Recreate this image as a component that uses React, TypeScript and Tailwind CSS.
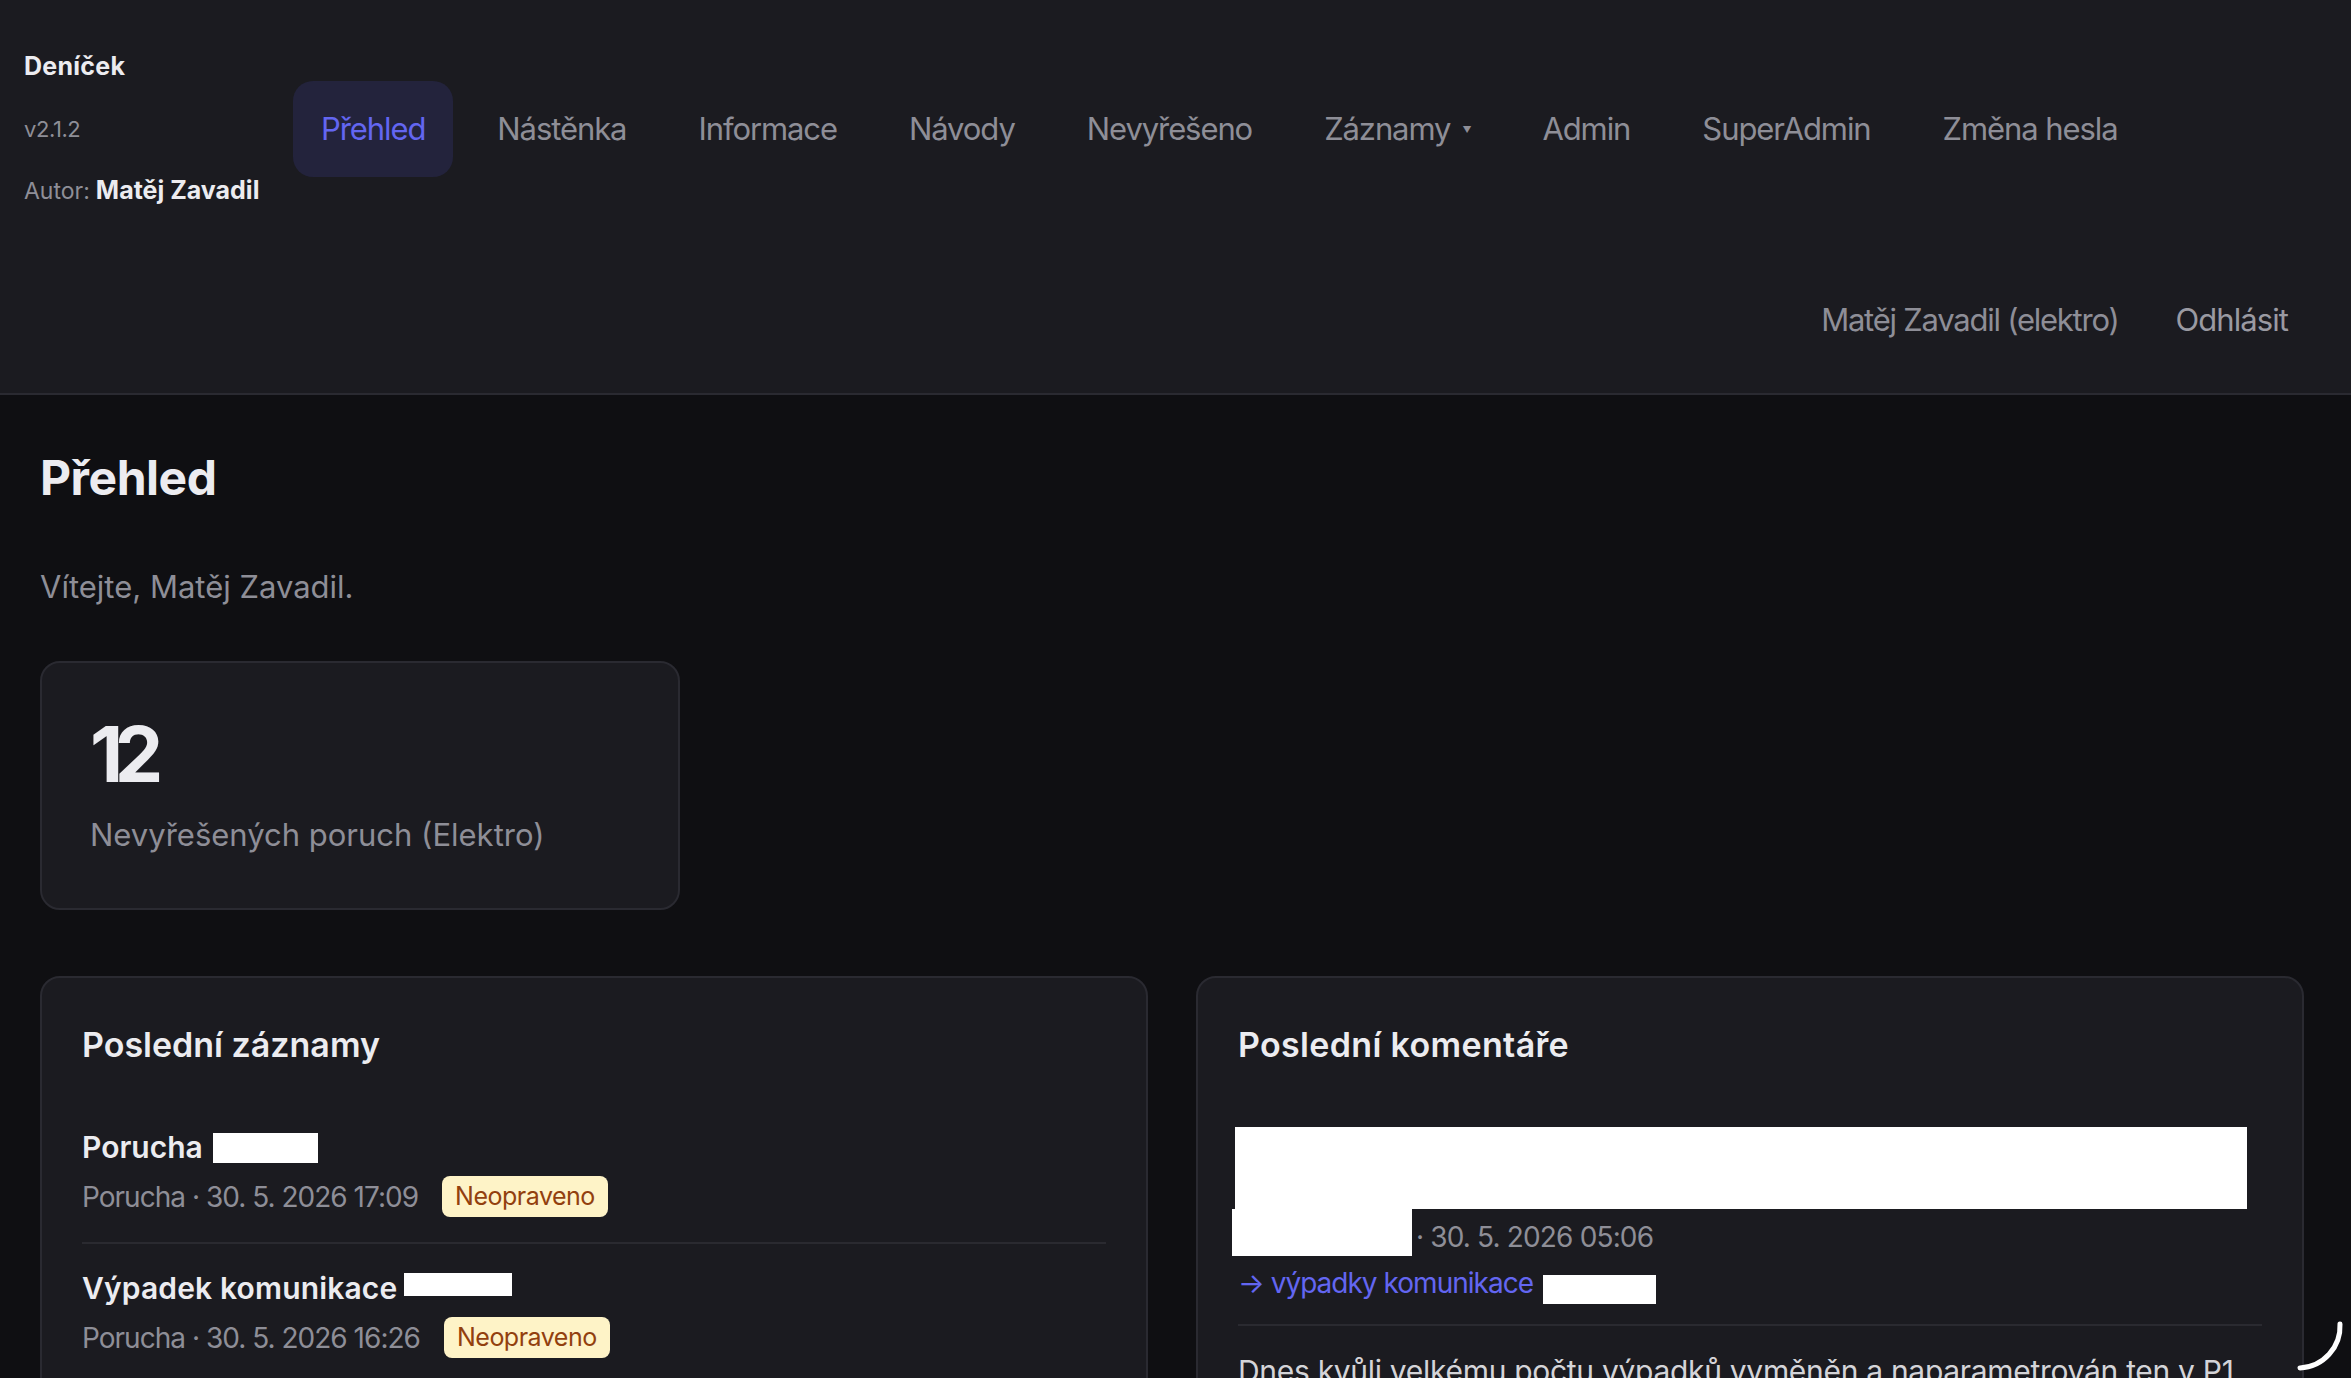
import React from "react";

const navItems = [
  "Přehled",
  "Nástěnka",
  "Informace",
  "Návody",
  "Nevyřešeno",
  "Záznamy",
  "Admin",
  "SuperAdmin",
  "Změna hesla",
];

function Redact({ className }: { className: string }) {
  return <span className={"inline-block bg-white shrink-0 " + className} />;
}

function Badge() {
  return (
    <span className="inline-flex items-center h-[41px] px-[13px] rounded-[8px] bg-[#fef3c7] text-[#92400e] text-[25px] tracking-[-0.02em] leading-none">
      Neopraveno
    </span>
  );
}

export default function App() {
  return (
    <div className="h-[1378px] w-full overflow-hidden bg-[#0f0f12] font-[Inter,sans-serif] relative">
      {/* Header */}
      <header className="bg-[#1b1b20] border-b-2 border-[#2a2a31] h-[395px] pt-[49px] pl-6 pr-[63px] flex flex-col">
        <div className="flex items-center">
          <div className="w-[269px] shrink-0 flex flex-col gap-[26px]">
            <div className="h-[36px] flex items-center text-[25px] font-bold text-[#ececf0] tracking-[0.01em]">
              Deníček
            </div>
            <div className="h-[36px] flex items-center text-[22px] text-[#8e8e97] tracking-[-0.02em]">
              v2.1.2
            </div>
            <div className="h-[36px] flex items-center text-[23px] text-[#8e8e97] whitespace-nowrap">
              <span>Autor:</span>
              <span className="ml-[6px] font-bold text-[25px] text-[#ececf0]">Matěj Zavadil</span>
            </div>
          </div>
          <nav className="flex items-center gap-4">
            {navItems.map((item, i) => (
              <div
                key={item}
                className={
                  "h-[96px] px-7 flex items-center rounded-[20px] text-[31px] tracking-[-0.035em] whitespace-nowrap " +
                  (i === 0 ? "bg-[#23233c] text-[#6366f1]" : "text-[#8e8e97]")
                }
              >
                {item}
                {item === "Záznamy" && (
                  <span className="ml-[12px] text-[9px] text-[#8e8e97] leading-none">▼</span>
                )}
              </div>
            ))}
          </nav>
        </div>
        <div className="mt-[63px] h-[96px] flex items-center justify-end text-[31px] text-[#8e8e97] whitespace-nowrap">
          <span className="tracking-[-0.04em]">Matěj Zavadil (elektro)</span>
          <span className="ml-[57px] tracking-[-0.03em] text-[#9a9aa2]">Odhlásit</span>
        </div>
      </header>

      {/* Main */}
      <main className="pl-10 pr-[47px] pt-[53px]">
        <h1 className="text-[48px] leading-[1.25] font-bold text-[#ececf0] tracking-[-0.01em]">Přehled</h1>
        <p className="mt-[55px] text-[31px] leading-[48px] text-[#8e8e97]">
          Vítejte, Matěj Zavadil.
        </p>

        <div className="mt-[50px] w-[640px] h-[249px] rounded-[20px] border-2 border-[#2a2a31] bg-[#1b1b20] p-12">
          <div className="mt-[5px] text-[77px] leading-none font-bold text-[#ececf0] tracking-[-0.11em]">12</div>
          <div className="mt-[18px] text-[31px] leading-[48px] text-[#8e8e97]">
            Nevyřešených poruch (Elektro)
          </div>
        </div>

        <div className="mt-[66px] grid grid-cols-2 gap-12">
          {/* Left card */}
          <section className="rounded-[20px] border-2 border-[#2a2a31] bg-[#1b1b20] px-10 pt-[43px] pb-10">
            <h2 className="text-[34px] leading-[1.4] font-semibold text-[#ececf0]">
              Poslední záznamy
            </h2>
            <div className="mt-[34px]">
              <div className="py-6 border-b-2 border-[#2a2a30]">
                <div className="h-[42px] flex items-center text-[30px] font-semibold text-[#ececf0]">
                  <span>Porucha</span>
                  <Redact className="ml-[10px] w-[105px] h-[30px]" />
                </div>
                <div className="mt-[7px] flex items-center gap-[24px]">
                  <span className="text-[28px] text-[#8e8e97] tracking-[-0.035em]">Porucha · 30. 5. 2026 17:09</span>
                  <Badge />
                </div>
              </div>
              <div className="py-6 border-b-2 border-[#2a2a30]">
                <div className="h-[42px] flex items-center text-[30px] font-semibold text-[#ececf0] tracking-[0.005em]">
                  <span>Výpadek komunikace</span>
                  <Redact className="ml-[7px] w-[108px] h-[23px] mb-[8px]" />
                </div>
                <div className="mt-[7px] flex items-center gap-[24px]">
                  <span className="text-[28px] text-[#8e8e97] tracking-[-0.035em]">Porucha · 30. 5. 2026 16:26</span>
                  <Badge />
                </div>
              </div>
              <div className="py-6">
                <div className="h-[42px] flex items-center text-[30px] font-semibold text-[#ececf0]">
                  <span>Porucha</span>
                </div>
              </div>
            </div>
          </section>

          {/* Right card */}
          <section className="rounded-[20px] border-2 border-[#2a2a31] bg-[#1b1b20] px-10 pt-[43px] pb-10">
            <h2 className="text-[34px] leading-[1.4] font-semibold text-[#ececf0] tracking-[0.01em]">
              Poslední komentáře
            </h2>
            <div className="mt-[34px]">
              <div className="pt-6 pb-[20px] border-b-2 border-[#2a2a30]">
                <div className="ml-[-3px] w-[1012px] h-[82px] bg-white" />
                <div className="h-[47px] flex items-center">
                  <Redact className="ml-[-6px] w-[180px] h-[47px]" />
                  <span className="ml-[4px] mt-[9px] text-[28px] text-[#8e8e97] tracking-[-0.03em]">· 30. 5. 2026 05:06</span>
                </div>
                <div className="mt-[6px] h-[42px] flex items-end">
                  <span className="text-[28px] leading-[42px] text-[#6366f1] tracking-[-0.035em]">→ výpadky komunikace</span>
                  <Redact className="ml-[10px] w-[113px] h-[29px]" />
                </div>
              </div>
              <div className="pt-6 pr-4">
                <p className="text-[30px] leading-[42px] text-[#d4d4d8] tracking-[-0.01em]">
                  Dnes kvůli velkému počtu výpadků vyměněn a naparametrován ten v P1 a zároveň byl zkontrolován kabel.
                </p>
              </div>
            </div>
          </section>
        </div>
      </main>

      {/* Loading spinner overlay */}
      <svg
        className="absolute left-[2288px] top-[1314px]"
        width="60"
        height="62"
        viewBox="0 0 60 62"
        fill="none"
      >
        <path d="M52 10 A42 42 0 0 1 12 54" stroke="white" strokeWidth="5" strokeLinecap="round" />
      </svg>
    </div>
  );
}
